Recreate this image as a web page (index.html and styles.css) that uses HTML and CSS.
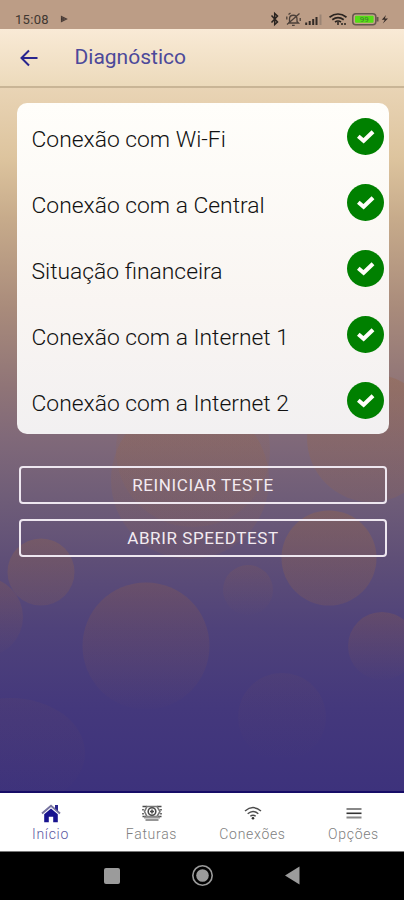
FILE: index.html
```html
<!DOCTYPE html>
<html lang="pt-BR">
<head>
<meta charset="utf-8">
<meta name="viewport" content="width=device-width, initial-scale=1">
<title>Diagnóstico</title>
<link rel="stylesheet" href="styles.css">
</head>
<body>
<svg class="defs" width="0" height="0" aria-hidden="true">
  <symbol id="check" viewBox="0 0 37 37">
    <circle cx="18.5" cy="18.5" r="18.5" fill="#008000"/>
    <path d="M11.300 18.300 16.600 22.800 26 13.700" fill="none" stroke="#fffefa" stroke-width="4"/>
  </symbol>
</svg>
<div class="app">
  <div class="status">
    <span class="time">15:08</span>
    <svg class="play" width="8" height="8" viewBox="0 0 8 8"><path d="M1.500 1.500 6.500 4 1.500 6.500Z" fill="#77635a" stroke="#4b3e38" stroke-width="1.2"/><path d="M1 4H4" stroke="#332b28"/></svg>
    <svg class="indicators" width="122" height="18" viewBox="0 0 122 18">
      <path d="M2.500 5.500 8.500 12 5.700 14.500V3.500L8.500 6 2.500 12.500" fill="none" stroke="#29231f" stroke-width="1.500"/>
      <g fill="none" stroke="#4c4039" stroke-width="1.300">
        <path d="M20.500 13V9C20.500 4 28 4 28 9v2.500l1.500 1.500H19M23 15.300h2.700M30.500 3.500 18 14.500"/>
        <path d="M17.800 9.500v-3M31.200 8v3M19.500 4.500l2-1.500"/>
      </g>
      <path d="M37.200 12.500v2.500M40.700 11v4M44.200 9v6M47.500 7v8" stroke="#332b26" stroke-width="2"/>
      <path d="M51.500 4.500V15" stroke="#9b8474" stroke-width="2"/>
      <g fill="none" stroke="#29231f" stroke-width="1.700">
        <path d="M60.500 7.200Q69 .8 77.500 7.200M63.300 9.700Q69 5.500 74.700 9.700M66 12Q69 10 72 12"/>
        <path d="M69 12v3M73 13v2M76 13v2" stroke-width="1.500"/>
      </g>
      <rect x="83.800" y="3.800" width="23" height="11" rx="3" fill="#c4a38b" stroke="#66574e" stroke-width="1.500"/>
      <rect x="86" y="5.800" width="18.600" height="7" rx="1" fill="#55dd15"/>
      <path d="M108.500 7v4.500" stroke="#66574e" stroke-width="2"/>
      <text class="charge" x="95.300" y="12" text-anchor="middle">99</text>
      <path d="M117 5 112.800 9.700h3L113.800 13.500 119 8.500h-3.200Z" fill="#342a26"/>
    </svg>
  </div>
  <header class="bar">
    <svg class="back" width="18" height="18" viewBox="0 0 18 18"><path d="M17.500 9H2M9 1.500 1.500 9 9 16.500" fill="none" stroke="#29258e" stroke-width="2"/></svg>
    <h1>Diagnóstico</h1>
  </header>
  <main class="content">
    <svg class="bubbles" viewBox="0 0 404 705" aria-hidden="true">
      <defs>
        <linearGradient id="fade" x1="0" y1="0" x2="0" y2="1"><stop stop-color="#9a6040" stop-opacity=".24"/><stop offset="1" stop-color="#9a6040" stop-opacity=".01"/></linearGradient>
        <linearGradient id="fadeLow" x1="0" y1="0" x2="0" y2="1"><stop stop-color="#9a6040" stop-opacity=".06"/><stop offset="1" stop-color="#9a6040" stop-opacity="0"/></linearGradient>
        <linearGradient id="glow" x1="0" y1="0" x2="0" y2="1"><stop stop-color="#966548" stop-opacity=".38"/><stop offset="1" stop-color="#966548" stop-opacity=".2"/></linearGradient>
      </defs>
      <g fill="url(#glow)">
        <circle cx="190" cy="392" r="79" opacity=".6"/>
        <circle cx="193" cy="362" r="77" opacity=".5"/>
        <circle cx="371" cy="350" r="64"/>
        <circle cx="329" cy="470" r="47.500"/>
        <circle cx="41" cy="484" r="33.500" opacity=".85"/>
      </g>
      <g fill="url(#fade)">
        <circle cx="-17" cy="529" r="40"/>
        <circle cx="248" cy="502" r="25" opacity=".65"/>
        <circle cx="382" cy="558" r="34"/>
        <circle cx="146" cy="558" r="63.500"/>
      </g>
      <g fill="url(#fadeLow)">
        <circle cx="282" cy="629" r="44"/>
        <ellipse cx="10" cy="665" rx="75" ry="55"/>
      </g>
    </svg>
    <ul class="card">
      <li><span>Conexão com Wi-Fi</span><svg><use href="#check"/></svg></li>
      <li><span>Conexão com a Central</span><svg><use href="#check"/></svg></li>
      <li><span>Situação financeira</span><svg><use href="#check"/></svg></li>
      <li><span>Conexão com a Internet 1</span><svg><use href="#check"/></svg></li>
      <li><span>Conexão com a Internet 2</span><svg><use href="#check"/></svg></li>
    </ul>
    <div class="actions">
      <button>REINICIAR TESTE</button>
      <button>ABRIR SPEEDTEST</button>
    </div>
  </main>
  <nav class="tabs">
    <a class="active">
      <svg width="20" height="19" viewBox="0 0 20 19"><path d="M1 9.500 10 1.800 19 9.500" fill="none" stroke="#76739f" stroke-width="2"/><path d="M14 1h3V7L14 4.500Z" fill="#29258e"/><path d="M3.200 10.200 10 4.400l6.800 5.800v8h-4.600v-5.500H7.800v5.500H3.200Z" fill="#18138f"/></svg>
      <span>Início</span>
    </a>
    <a>
      <svg width="20" height="19" viewBox="0 0 20 19"><g fill="none" stroke="#4b4b4b" stroke-width="1.600"><path d="M.5 2.500H5M15 2.500h4.500M.5 12.500H4M16 12.500h3.500M1 5v1.500M19 5v1.500M1 9v1.500M19 9v1.500"/><path d="M5 2.500h10L18 7.500l-3 5H5L2.500 7.500Z" stroke="#777"/><circle cx="10" cy="7.500" r="3.800"/><path d="M10 5.500v4M8 7.500h4"/></g><path d="M2 13.500h16M3.500 16h13" stroke="#969696" stroke-width="1.800"/></svg>
      <span>Faturas</span>
    </a>
    <a>
      <svg width="20" height="19" viewBox="0 0 20 19"><g fill="none" stroke="#4c4c4c" stroke-width="1.400"><path d="M2 7Q10 .2 18 7M4.700 9.800Q10 5.200 15.300 9.800M7.300 12.300Q10 10 12.700 12.300"/></g><circle cx="10" cy="14.200" r="1.300" fill="#333"/></svg>
      <span>Conexões</span>
    </a>
    <a>
      <svg width="20" height="19" viewBox="0 0 20 19"><path d="M2.500 5h15M2.500 13.500h15" stroke="#888" stroke-width="1.900"/><path d="M2.500 9.300h15" stroke="#333" stroke-width="1.600"/></svg>
      <span>Opções</span>
    </a>
  </nav>
  <div class="system">
    <svg width="404" height="47" viewBox="0 0 404 47" fill="#9b9b9b"><rect x="104" y="16" width="16" height="16" rx="2"/><circle cx="202.500" cy="23.500" r="9.700" fill="none" stroke="#9b9b9b" stroke-width="1.600"/><circle cx="202.500" cy="23.500" r="6.300"/><path d="M285 23.500 299.500 14.500v18Z"/></svg>
  </div>
</div>
</body>
</html>
```
FILE: styles.css
```css
* { box-sizing: border-box; }
body { margin: 0; font-family: Roboto, "Liberation Sans", sans-serif; }
.defs { position: absolute; }
.app { width: 404px; height: 900px; display: flex; flex-direction: column; overflow: hidden; }
.status { height: 29px; flex: none; display: flex; align-items: center; padding: 9px 13px 0 15px; background: #bc9d86; }
.time { width: 45px; font-size: 13px; letter-spacing: .3px; color: #403731; }
.indicators { margin-left: auto; }
.charge { font: 8px Roboto, sans-serif; fill: #46753a; }
.bar { height: 59px; flex: none; display: flex; align-items: center; gap: 36.500px; padding: 0 20px; background: linear-gradient(#f9ead6, #ecdabb); border-bottom: 2px solid #c9b596; }
h1 { margin: 0; padding-bottom: 1px; font-size: 21px; font-weight: 400; line-height: 28px; color: #4c499a; }
.content { position: relative; flex: 1; min-height: 0; padding: 15px 15px 0 17px; background: linear-gradient(#e9d4b5 0, #ddc49e 70px, #c7ab8b 130px, #a98b7b 220px, #8f7477 300px, #806979 350px, #6f5d78 410px, #5e4e77 475px, #4f427a 540px, #44387c 620px, #3d327c 705px); border-bottom: 2px solid #160c67; }
.bubbles { position: absolute; inset: 0; width: 404px; height: 705px; }
.card { position: relative; margin: 0; padding: 0 5px 0 14.500px; list-style: none; height: 331px; border-radius: 10px; background: linear-gradient(#fffefa, #f9f5f2 60%, #f2f0f1); }
.card li { display: flex; justify-content: space-between; height: 66.200px; padding-top: 14.500px; }
.card span { font-size: 22.850px; line-height: 43px; font-weight: 300; color: #111; white-space: nowrap; }
.card svg { width: 37px; height: 37px; flex: none; }
.actions { position: relative; display: flex; flex-direction: column; gap: 15px; padding: 32px 2px 0 2px; }
button { height: 38px; border: 2px solid #eee7f0; border-radius: 4px; background: transparent; color: #f3ebf1; font: 400 17px Roboto, sans-serif; letter-spacing: .6px; padding: 0; }
.tabs { height: 59px; flex: none; display: flex; padding-top: 11px; background: #fff; border-bottom: 1px solid #777; }
.tabs a { flex: 1; display: flex; flex-direction: column; align-items: center; color: #808080; }
.tabs span { font-size: 14px; line-height: 20px; font-weight: 300; letter-spacing: .7px; margin-top: 1px; }
.tabs .active { color: #5c589f; }
.system { height: 48px; flex: none; background: #000; }
.system svg { display: block; }
```
